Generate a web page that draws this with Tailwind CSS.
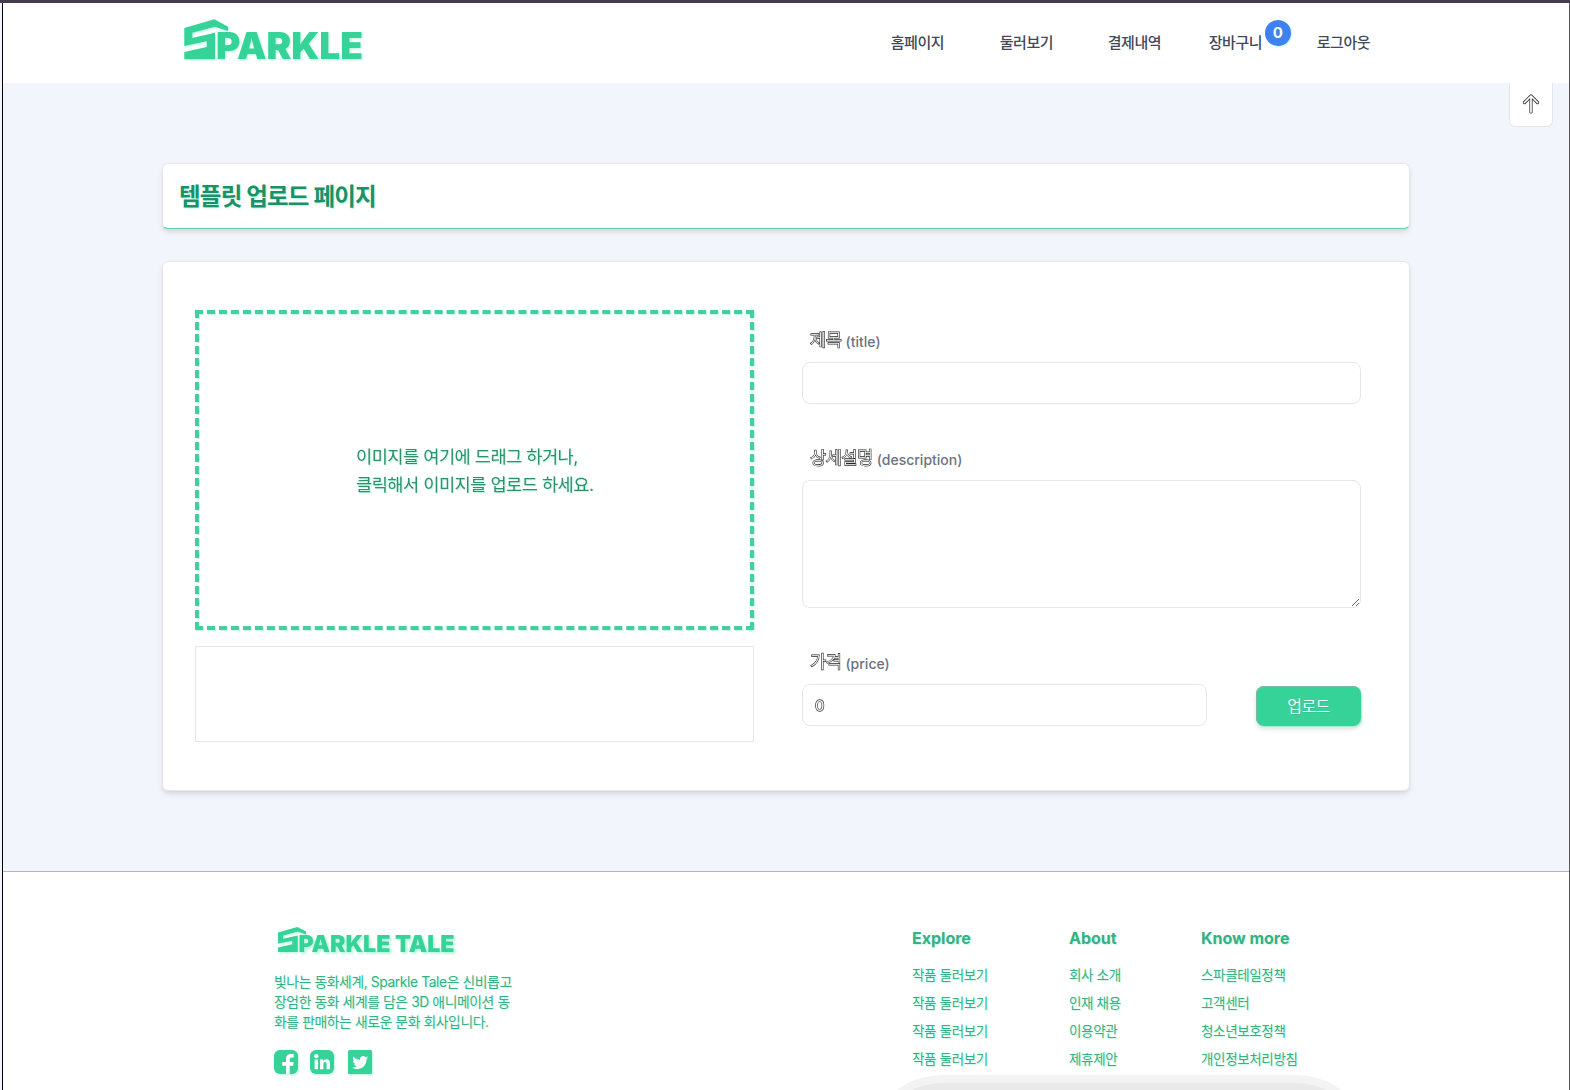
<!DOCTYPE html>
<html lang="ko">
<head>
<meta charset="utf-8">
<title>Sparkle Tale</title>
<script src="https://cdn.jsdelivr.net/npm/@tailwindcss/browser@4"></script>
</head>
<body class="relative h-[1090px] w-[1570px] overflow-hidden border-t-[3px] border-[#443b4e] bg-[#f2f5fc] font-['Inter','Noto_Sans_CJK_KR',sans-serif] whitespace-nowrap">
<div class="flex h-[1087px] flex-col border-l border-r border-r-[#555555] border-l-black ml-[2px]">
  <header class="flex h-20 shrink-0 items-center justify-between bg-white pl-[178px] pr-[199px]">
    <svg class="h-[60px] w-[196px] overflow-visible [filter:drop-shadow(1px_1px_1px_#b5f9df)]" viewBox="181 13 196 60" fill="#36d399">
      <path d="M184.3 28 214.3 19.3 228 26.7V31L215 26.7 192.3 32.7V38L215 32.7V59.3H184.3V52L206.7 47V41.3L184.3 46Z"/>
      <text x="216" y="59.3" font-size="37" font-weight="900" textLength="147" lengthAdjust="spacingAndGlyphs">PARKLE</text>
    </svg>
    <nav class="flex h-full items-center text-[15px] leading-6 font-medium tracking-[-0.5px] text-[#414957]">
      <a class="w-[109px]">홈페이지</a>
      <a class="w-[108px]">둘러보기</a>
      <a class="w-[101px]">결제내역</a>
      <a class="relative w-[108px]">장바구니<span class="absolute -top-[11px] left-[56px] flex size-[26px] items-center justify-center rounded-full bg-[#3e82f2] text-[15px] font-bold tracking-normal text-white shadow-[1px_1px_1px_#c6f8f4]">0</span></a>
      <a>로그아웃</a>
    </nav>
  </header>

  <main class="flex h-[788px] shrink-0 flex-col gap-8 px-[159px] pt-20">
    <section class="flex h-[66px] w-[1248px] shrink-0 items-center rounded-md border border-[#e6e7ea] border-b-[#66d3ad] bg-white px-4 pt-px shadow-[0_1px_0_#b5e9d4,0_4px_6px_-1px_#0000001a,0_2px_4px_-2px_#0000001a]">
      <h1 class="text-[23.5px] font-bold tracking-[-0.8px] text-[#1c9168] [text-shadow:1px_1px_1px_#b5f9df]">템플릿 업로드 페이지</h1>
    </section>
    <section class="flex h-[530px] w-[1248px] shrink-0 gap-12 rounded-md border border-[#e6e7ea] bg-white pt-12 pl-8 shadow-md">
      <div class="flex w-[559px] flex-col gap-4">
        <div class="flex h-80 items-center justify-center border-4 border-dashed border-[#45cf9f] [filter:drop-shadow(1px_1px_0.5px_#c5fae5)]">
          <p class="w-[237px] pt-px text-[17.6px] leading-7 tracking-[-0.5px] text-[#2d916d]">이미지를 여기에 드래그 하거나,<br>클릭해서 이미지를 업로드 하세요.</p>
        </div>
        <div class="h-24 border border-[#e5e6e8]"></div>
      </div>
      <form class="flex w-[559px] flex-col">
        <label class="mt-[15px] flex h-[37px] items-center gap-1 pl-2 pb-2">
          <span class="pt-px text-[17.6px] font-light tracking-[-0.4px] text-white [filter:grayscale(1)] [-webkit-text-stroke:1.3px_#2a2a2a] [paint-order:stroke]">제목</span>
          <span class="pt-1 text-sm font-medium text-[#6b7280]">(title)</span>
        </label>
        <input class="h-[42px] rounded-lg border border-[#e5e6e8] px-3">
        <label class="mt-[39px] flex h-[37px] items-center gap-1 pl-2 pb-2">
          <span class="pt-px text-[17.6px] font-light tracking-[-0.5px] text-white [filter:grayscale(1)] [-webkit-text-stroke:1.3px_#2a2a2a] [paint-order:stroke]">상세설명</span>
          <span class="pt-1 text-sm font-medium text-[#6b7280]">(description)</span>
        </label>
        <textarea class="h-32 rounded-lg border border-[#e5e6e8]"></textarea>
        <label class="mt-[39px] flex h-[37px] items-center gap-1 pl-2 pb-2">
          <span class="pt-px text-[17.6px] font-light tracking-[-0.5px] text-white [filter:grayscale(1)] [-webkit-text-stroke:1.3px_#2a2a2a] [paint-order:stroke]">가격</span>
          <span class="pt-1 text-sm font-medium text-[#6b7280]">(price)</span>
        </label>
        <div class="flex items-end justify-between">
          <input value="0" class="h-[42px] w-[405px] rounded-lg border border-[#e5e6e8] px-3 text-[15px] text-white [filter:grayscale(1)] [-webkit-text-stroke:1.3px_#2a2a2a] [paint-order:stroke]">
          <button type="button" class="h-10 w-[105px] rounded-lg bg-[#36d399] text-base tracking-[-0.6px] text-[#f0fff9] shadow-[1px_1px_1px_#9ef5d2,0_3px_4px_#00000022,inset_1px_1px_1px_#82b9a3] [text-shadow:1px_1px_1px_#4ab892]">업로드</button>
        </div>
      </form>
    </section>
  </main>

  <footer class="flex min-h-0 grow border-t border-[#a8bcc0] bg-white pt-[54px] pl-[271px] text-[#35b184] [text-shadow:1px_1px_1px_#c5fae5]">
    <div class="w-[638px]">
      <svg class="-mt-0.5 h-[34px] w-[196px] overflow-visible [filter:drop-shadow(1px_1px_1px_#b5f9df)]" viewBox="274 924 196 34" fill="#36d399" text-rendering="geometricPrecision">
        <path d="M278 932.4 297.3 927 306 931.6V934.4L297.7 931.6 283.2 935.4V938.8L297.7 935.4V952H278V947.4L292.3 944.2V940.7L278 943.6Z"/>
        <text x="298.5" y="952" font-size="23.4" font-weight="900" textLength="156" lengthAdjust="spacingAndGlyphs">PARKLE TALE</text>
      </svg>
      <p class="mt-[14px] text-[13.8px] leading-5 tracking-[-0.38px]">빛나는 동화세계, Sparkle Tale은 신비롭고<br>장엄한 동화 세계를 담은 3D 애니메이션 동<br>화를 판매하는 새로운 문화 회사입니다.</p>
      <div class="mt-[18px] flex text-[#36d399] [filter:drop-shadow(1px_1px_1px_#b5f9df)]">
        <svg class="mr-3 size-6" viewBox="0 0 24 24"><rect width="24" height="24" rx="6" fill="currentColor"/><path fill="#fff" d="M12 24V15.8H8.3V12H12V9.2C12 5.6 13.8 4 17 4H19.7V7.4H17.8C16.3 7.4 15.7 8.1 15.7 9.5V12H19.7L19.1 15.8H15.7V24Z"/></svg>
        <svg class="mr-[14px] size-6" viewBox="0 0 24 24"><rect width="24" height="24" rx="6" fill="currentColor"/><circle cx="6.3" cy="6.2" r="2.1" fill="#fff"/><path fill="#fff" d="M4.6 9.5H8V19.3H4.6ZM10 9.5H13.2V11C14 9.8 15 9.2 16.5 9.2 19 9.2 20 10.9 20 13.5V19.3H16.6V14C16.6 12.7 16.2 12 15.2 12 14 12 13.4 12.8 13.4 14.1V19.3H10Z"/></svg>
        <svg class="size-6" viewBox="0 0 24 24"><rect width="24" height="24" rx="1.5" fill="currentColor"/><path fill="#fff" d="M20 7.5C19.4 7.8 18.8 8 18.1 8 18.8 7.6 19.3 7 19.6 6.2 18.9 6.6 18.2 6.9 17.4 7 15.3 4.8 11.5 6.3 12.1 10 9.4 9.9 7 8.6 5.4 6.6 4.4 8.3 5 10.1 6.4 11 5.9 11 5.4 10.8 4.9 10.6 4.9 12.3 6.1 13.5 7.5 13.8 7 13.9 6.5 14 6 13.9 6.4 15.1 7.6 16.1 9.1 16.1 7.6 17.2 6 17.6 4.2 17.4 10.5 21.3 18.6 17.3 18.4 9.4 19.1 8.8 19.6 8.2 20 7.5Z"/></svg>
      </div>
    </div>
    <div class="w-[157px]">
      <h2 class="text-base leading-6 font-bold">Explore</h2>
      <ul class="mt-[11px] text-[13.5px] leading-7 tracking-[-0.35px]"><li>작품 둘러보기</li><li>작품 둘러보기</li><li>작품 둘러보기</li><li>작품 둘러보기</li></ul>
    </div>
    <div class="w-[132px]">
      <h2 class="text-base leading-6 font-bold">About</h2>
      <ul class="mt-[11px] text-[13.5px] leading-7 tracking-[-0.35px]"><li>회사 소개</li><li>인재 채용</li><li>이용약관</li><li>제휴제안</li></ul>
    </div>
    <div>
      <h2 class="text-base leading-6 font-bold">Know more</h2>
      <ul class="mt-[11px] text-[13.5px] leading-7 tracking-[-0.35px]"><li>스파클테일정책</li><li>고객센터</li><li>청소년보호정책</li><li>개인정보처리방침</li></ul>
    </div>
  </footer>
</div>

<!-- back-to-top tab -->
<button type="button" class="absolute top-20 right-[17px] flex h-11 w-11 items-center justify-center rounded-b-md border border-t-0 border-[#e5e6e8] bg-white pb-px">
  <svg class="size-6" viewBox="0 0 24 24" fill="none" stroke-linecap="round" stroke-linejoin="round"><path d="M12 20V4.5M5.5 10.5 12 4 18.5 10.5" stroke="#333" stroke-width="3.2"/><path d="M12 20V4.5M5.5 10.5 12 4 18.5 10.5" stroke="#fff" stroke-width="1.7"/></svg>
</button>

<!-- floating panel peeking in from the bottom edge -->
<div class="absolute top-[1072px] left-[884px] h-[15px] w-[470px] overflow-hidden"><div class="h-20 rounded-[60px/40px] border-8 border-[#f3f3f3] bg-[#e9e9e9]"></div></div>
</body>
</html>
